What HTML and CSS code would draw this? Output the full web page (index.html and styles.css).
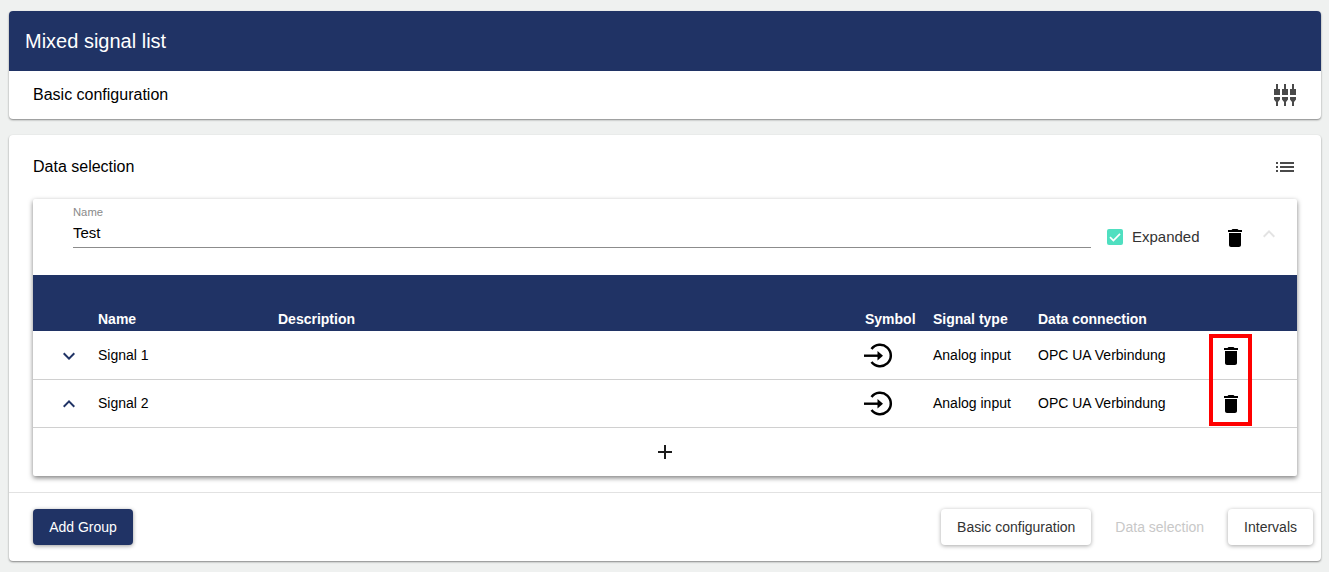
FILE: index.html
```html
<!DOCTYPE html>
<html lang="en">
<head>
<meta charset="utf-8">
<title>Mixed signal list</title>
<link rel="stylesheet" href="styles.css">
</head>
<body>
<svg class="defs" width="0" height="0" aria-hidden="true">
  <defs>
    <symbol id="trash" viewBox="0 0 24 24"><path d="M6 19c0 1.100.9 2 2 2h8c1.100 0 2-.9 2-2V7H6v12zM19 4h-3.500l-1-1h-5l-1 1H5v2h14V4z"/></symbol>
    <symbol id="input" viewBox="0 0 32 32"><path d="M8.500 9A10.750 10.750 0 1 1 8.500 22" fill="none" stroke="currentColor" stroke-width="2.500"/><path d="M1 15.700h15" fill="none" stroke="currentColor" stroke-width="2.400"/><path d="M14.500 11l5.500 4.700-5.500 4.700z"/></symbol>
  </defs>
</svg>
<main class="page">
  <section class="card top-card">
    <h1 class="title-bar">Mixed signal list</h1>
    <div class="section-row compact">
      <span class="section-title">Basic configuration</span>
      <svg class="tune" viewBox="0 0 24 24" width="24" height="24"><path d="M3 1h2v5h2v6H1V6h2zM1 14h6v2.500L5 19v4H3v-4l-2-2.500zM11 1h2v5h2v6H9V6h2zM9 14h6v2.500L13 19v4h-2v-4l-2-2.500zM19 1h2v5h2v6h-6V6h2zM17 14h6v2.500L21 19v4h-2v-4l-2-2.500z"/></svg>
    </div>
  </section>

  <section class="card data-card">
    <div class="section-row data-head">
      <span class="section-title">Data selection</span>
      <svg class="list" viewBox="0 0 24 24" width="24" height="24"><path d="M3 13h2v-2H3v2zm0 4h2v-2H3v2zm0-8h2V7H3v2zm4 4h14v-2H7v2zm0 4h14v-2H7v2zM7 7v2h14V7H7z"/></svg>
    </div>

    <div class="group">
      <div class="group-head">
        <label class="field">
          <span class="field-label">Name</span>
          <span class="field-value">Test</span>
        </label>
        <span class="check"><svg viewBox="0 0 16 16" width="16" height="16"><path d="M3 8.200l3.400 3.300L13 4.800" fill="none" stroke="#fff" stroke-width="1.700"/></svg></span>
        <span class="check-label">Expanded</span>
        <svg class="group-trash" width="24" height="24"><use href="#trash"/></svg>
        <svg class="group-chevron" viewBox="0 0 24 24" width="24" height="24"><path d="M7.410 15.410 12 10.830l4.590 4.580L18 14l-6-6-6 6z"/></svg>
      </div>

      <div class="table">
        <div class="row head">
          <span></span><span>Name</span><span>Description</span><span>Symbol</span><span>Signal type</span><span>Data connection</span><span></span>
        </div>
        <div class="rows">
          <div class="row">
            <svg class="chevron" viewBox="0 0 24 24" width="24" height="24"><path d="M7.410 8.590 12 13.170l4.590-4.580L18 10l-6 6-6-6z"/></svg>
            <span class="cell">Signal 1</span><span></span>
            <svg class="symbol" width="32" height="32"><use href="#input"/></svg>
            <span class="cell">Analog input</span><span class="cell">OPC UA Verbindung</span>
            <svg class="row-trash" width="24" height="24"><use href="#trash"/></svg>
          </div>
          <div class="row">
            <svg class="chevron" viewBox="0 0 24 24" width="24" height="24"><path d="M7.410 15.410 12 10.830l4.590 4.580L18 14l-6-6-6 6z"/></svg>
            <span class="cell">Signal 2</span><span></span>
            <svg class="symbol" width="32" height="32"><use href="#input"/></svg>
            <span class="cell">Analog input</span><span class="cell">OPC UA Verbindung</span>
            <svg class="row-trash" width="24" height="24"><use href="#trash"/></svg>
          </div>
        </div>
        <div class="add-row">
          <svg viewBox="0 0 24 24" width="24" height="24"><path d="M19 13h-6v6h-2v-6H5v-2h6V5h2v6h6z"/></svg>
        </div>
        <div class="highlight"></div>
      </div>
    </div>

    <footer class="footer">
      <button class="btn primary" type="button">Add Group</button>
      <div class="nav">
        <button class="btn raised" type="button">Basic configuration</button>
        <button class="btn flat" type="button" disabled>Data selection</button>
        <button class="btn raised" type="button">Intervals</button>
      </div>
    </footer>
  </section>
</main>
</body>
</html>
```

FILE: styles.css
```css
* { box-sizing: border-box; }
html, body { margin: 0; height: 100%; }
body {
  background: #eff1f0;
  font-family: "Liberation Sans", Arial, sans-serif;
  color: #000;
  overflow: hidden;
}
.defs { position: absolute; }
.page {
  display: flex;
  flex-direction: column;
  gap: 16px;
  padding: 11px 8px 0 9px;
}
.card {
  background: #fff;
  border-radius: 4px;
  box-shadow: 0 1px 2px rgba(0,0,0,.45);
}
.top-card { overflow: hidden; }
.title-bar {
  margin: 0;
  height: 60px;
  padding: 0 16px;
  display: flex;
  align-items: center;
  background: #203365;
  color: #fff;
  font: 400 20px "Liberation Sans", sans-serif;
}
.section-row {
  display: flex;
  align-items: center;
  justify-content: space-between;
  padding: 0 24px;
}
.compact { height: 48px; }
.section-title { font: 400 16px "Liberation Sans", sans-serif; }
.tune { fill: #4a4a4a; }
.list { fill: #4a4a4a; }
.data-head { height: 64px; }
.group {
  margin: 0 24px;
  background: #fff;
  border-radius: 2px;
  box-shadow: 0 2px 5px rgba(0,0,0,.5);
}
.group-head {
  height: 76px;
  padding: 0 16px 0 40px;
  display: flex;
  align-items: flex-start;
}
.field {
  flex: 1;
  height: 49px;
  display: flex;
  flex-direction: column;
  border-bottom: 1px solid #8c8c8c;
  margin-right: 16px;
}
.field-label { font: 400 11.250px "Liberation Sans", sans-serif; color: #8a8a8a; margin-top: 7px; }
.field-value { font: 400 15px "Liberation Sans", sans-serif; margin-top: 6px; }
.check {
  width: 16px; height: 16px;
  margin-top: 30px;
  background: #4fdfc0;
  border-radius: 2px;
  display: flex;
}
.check-label { font: 400 15px "Liberation Sans", sans-serif; line-height: 16px; margin-top: 30px; color: #333; margin-left: 9px; width: 67px; white-space: nowrap; }
.group-trash { margin: 27px 0 0 24px; }
.group-chevron { fill: #e3e3e3; margin: 23px 0 0 10px; }
.table { position: relative; }
.row {
  display: grid;
  grid-template-columns: 65px 180px 587px 68px 105px 172px 1fr;
  align-items: center;
  height: 48px;
  border-bottom: 1px solid #d0d0d0;
  font: 400 14px "Liberation Sans", sans-serif;
}
.rows { padding-top: 1px; }
.cell { padding-bottom: 2px; }
.row.head {
  height: 56px;
  padding-top: 32px;
  background: #203365;
  color: #fff;
  border: 0;
  font: 700 14px "Liberation Sans", sans-serif;
}
.chevron { fill: #203365; margin-left: 24px; }
.symbol { color: #000; margin-left: -2px; }
.row-trash { margin-left: 9px; }
.add-row {
  height: 48px;
  display: flex;
  align-items: center;
  justify-content: center;
  fill: #1c1c1c;
}
.highlight {
  position: absolute;
  left: 1176px;
  top: 59px;
  width: 43px;
  height: 92px;
  border: 4px solid #f00;
}
.footer {
  margin-top: 16px;
  height: 69px;
  padding: 0 8px 0 24px;
  border-top: 1px solid #e2e2e2;
  display: flex;
  align-items: center;
  justify-content: space-between;
}
.btn {
  height: 36px;
  padding: 0 16px;
  border: 0;
  border-radius: 4px;
  background: transparent;
  font: 400 14px "Liberation Sans", sans-serif;
}
.primary { width: 100px; padding: 0; background: #203365; color: #fff; box-shadow: 0 1px 4px rgba(0,0,0,.4); }
.raised { background: #fff; color: #333; box-shadow: 0 1px 4px rgba(0,0,0,.35); }
.flat { color: #c8c8c8; }
.nav { display: flex; align-items: center; gap: 8px; }
```
